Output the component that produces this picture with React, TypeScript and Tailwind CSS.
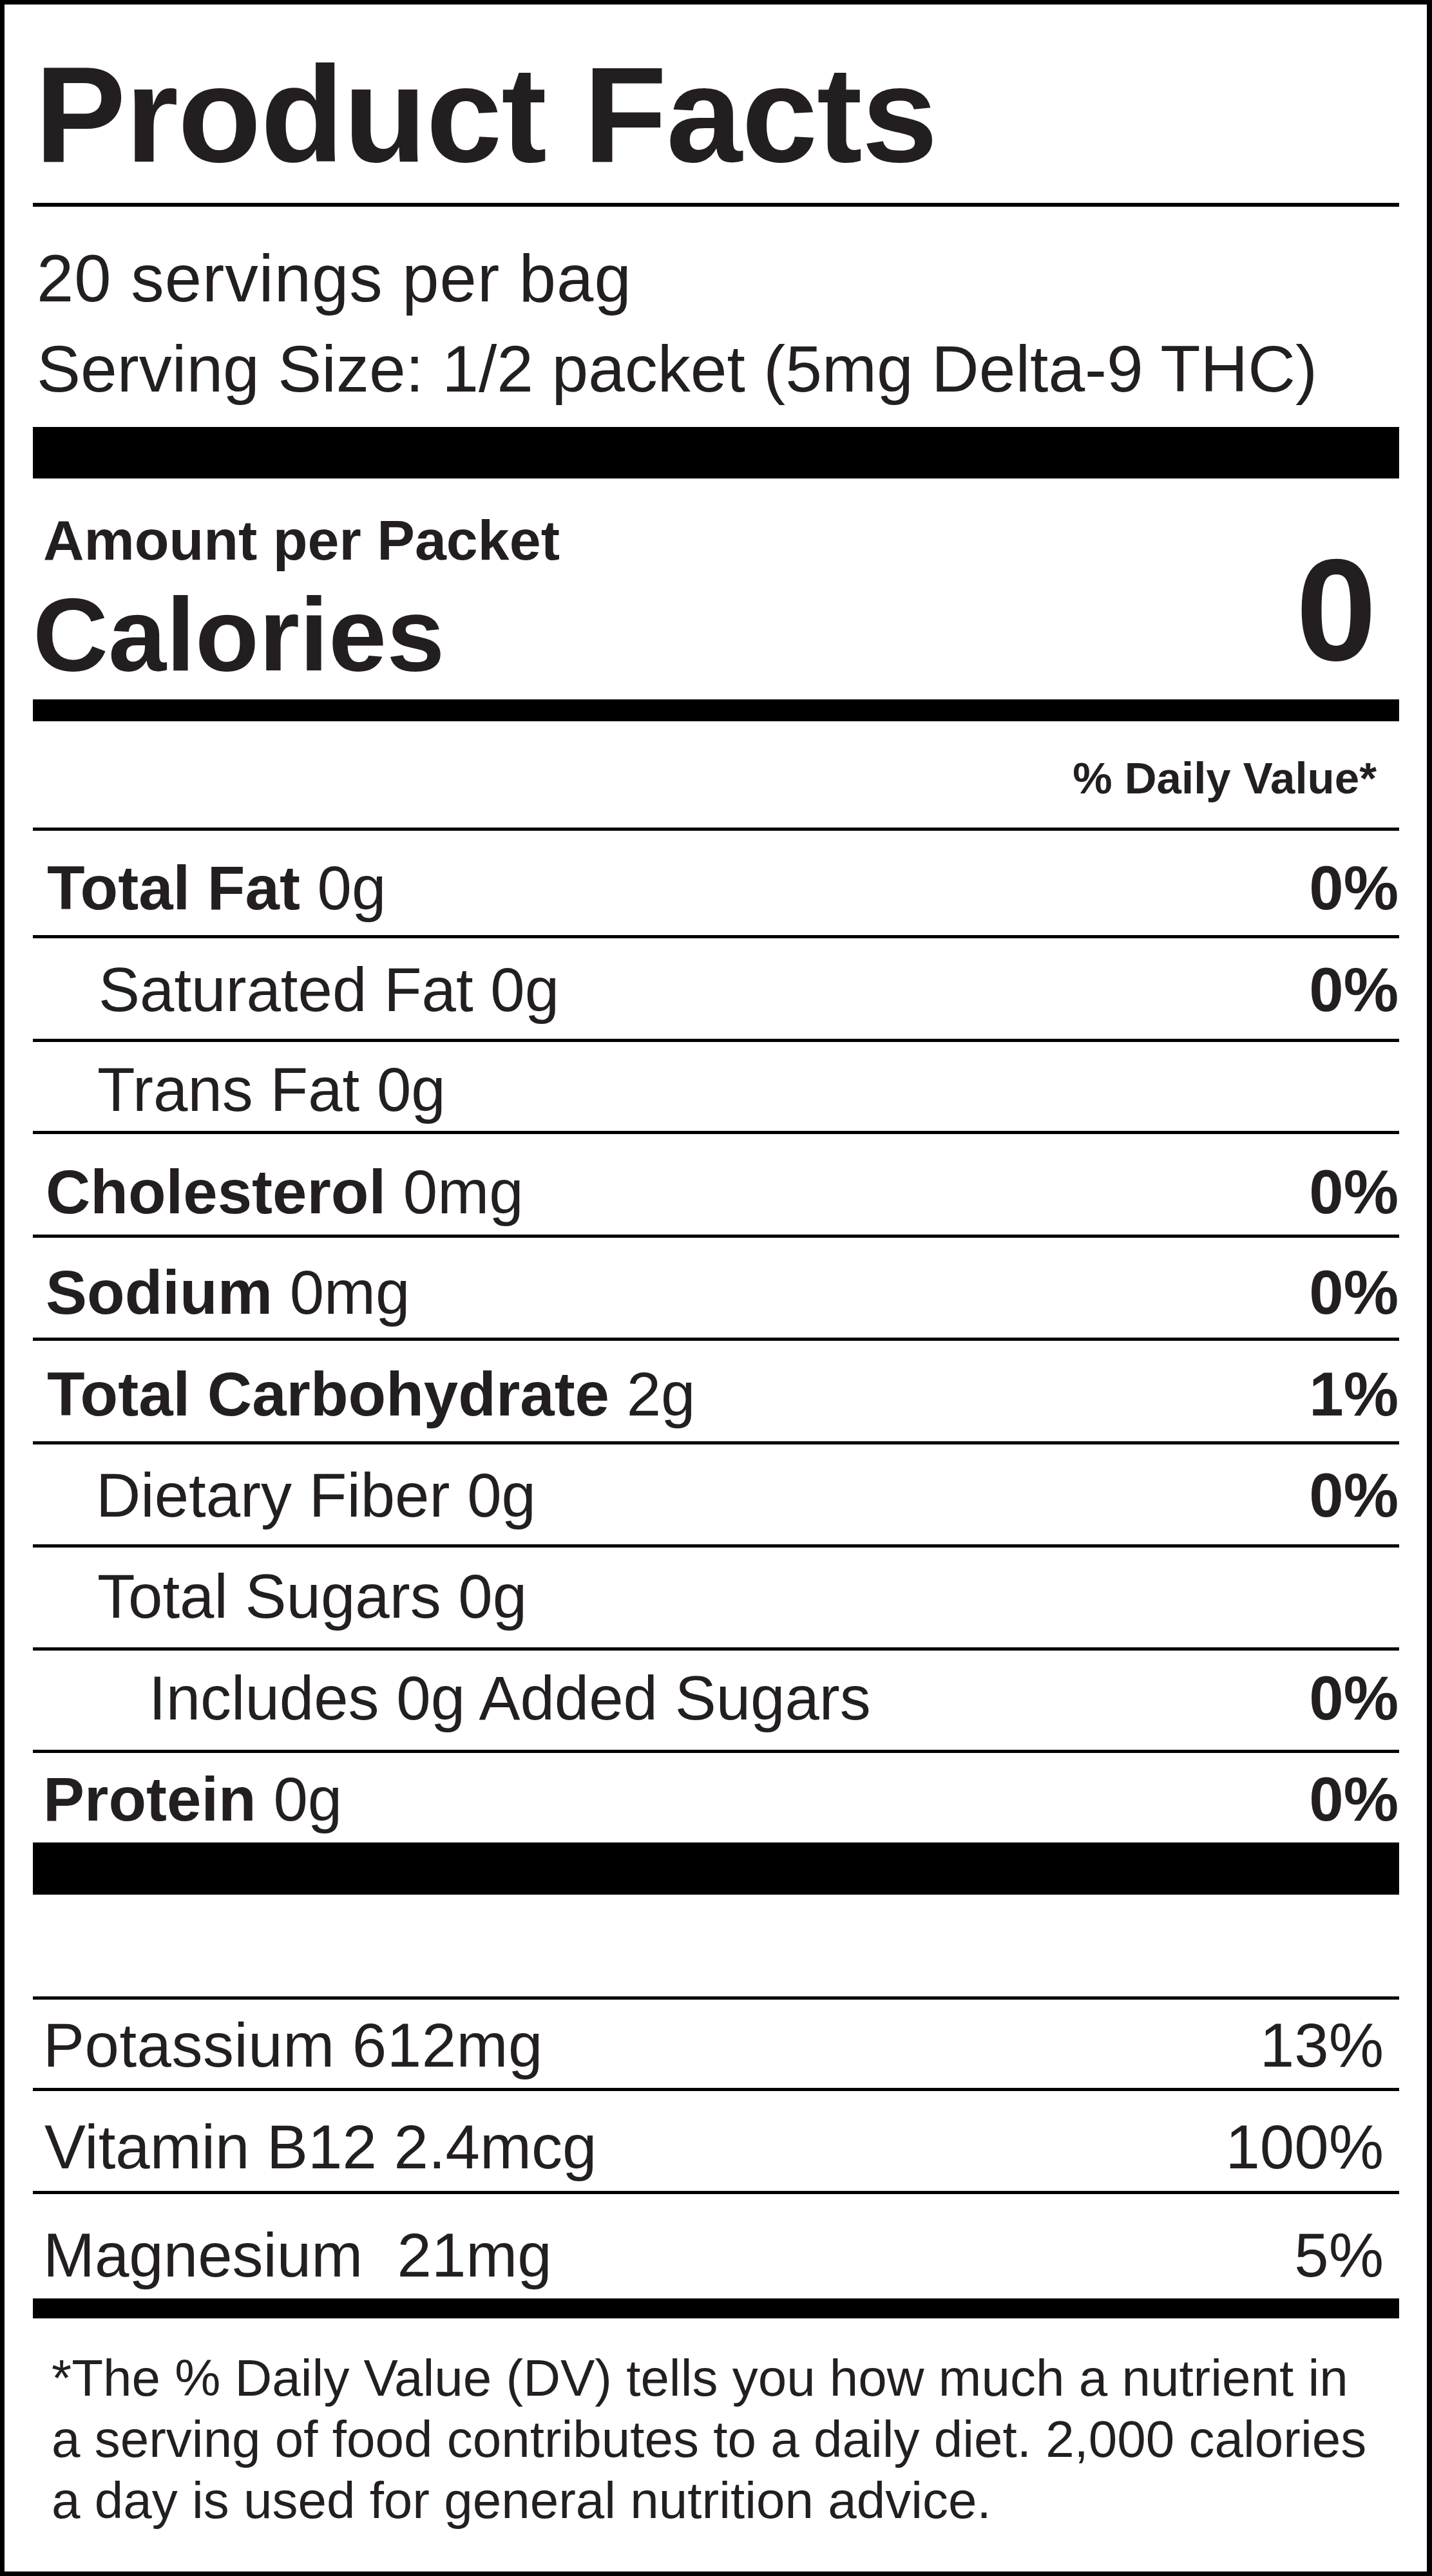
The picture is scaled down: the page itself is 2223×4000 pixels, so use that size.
type Row = {
  bold?: string;
  text: string;
  pct?: string;
  cls: string;
  line?: boolean;
};

// heights include the 5px rule drawn under each row
const rows: Row[] = [
  { bold: 'Total Fat', text: ' 0g', pct: '0%', cls: 'h-[167px] pb-[25px] pl-[22px]', line: true },
  { text: 'Saturated Fat 0g', pct: '0%', cls: 'h-[161px] pb-[28px] pl-[102px]', line: true },
  { text: 'Trans Fat 0g', cls: 'h-[143px] pb-[16px] pl-[100px]', line: true },
  { bold: 'Cholesterol', text: ' 0mg', pct: '0%', cls: 'h-[161px] pb-[18px] pl-[20px]', line: true },
  { bold: 'Sodium', text: ' 0mg', pct: '0%', cls: 'h-[160px] pb-[22px] pl-[20px]', line: true },
  { bold: 'Total Carbohydrate', text: ' 2g', pct: '1%', cls: 'h-[161px] pb-[25px] pl-[22px]', line: true },
  { text: 'Dietary Fiber 0g', pct: '0%', cls: 'h-[160px] pb-[28px] pl-[98px]', line: true },
  { text: 'Total Sugars 0g', cls: 'h-[160px] pb-[31px] pl-[100px]', line: true },
  { text: 'Includes 0g Added Sugars', pct: '0%', cls: 'h-[159px] pb-[32px] pl-[180px]', line: true },
  { bold: 'Protein', text: ' 0g', pct: '0%', cls: 'h-[139px] pb-[19px] pl-[16px]' },
];

const minerals: Row[] = [
  { text: 'Potassium 612mg', pct: '13%', cls: 'h-[142px] pb-[18px] pl-[16px] tracking-[0.5px]', line: true },
  { text: 'Vitamin B12 2.4mcg', pct: '100%', cls: 'h-[160px] pb-[20px] pl-[18px]', line: true },
  { text: 'Magnesium  21mg', pct: '5%', cls: 'h-[162px] pb-[19px] pl-[16px]' },
];

function FactRow({ row, pctCls }: { row: Row; pctCls: string }) {
  return (
    <div className={`flex items-end justify-between box-border ${row.cls} ${row.line ? 'border-b-[5px] border-black' : ''}`}>
      <span className="text-[96px] leading-none whitespace-pre">
        {row.bold && <span className="font-bold">{row.bold}</span>}
        {row.text}
      </span>
      {row.pct && <span className={`text-[96px] leading-none tracking-normal ${pctCls}`}>{row.pct}</span>}
    </div>
  );
}

export default function App() {
  return (
    <div className="w-[2223px] h-[4000px] bg-white text-[#231f20] font-['Liberation_Sans',Arial,sans-serif]">
      <div className="box-border h-full border-[7px] border-r-[8px] border-black pl-[44px] pr-[43px] flex flex-col">
        <h1 className="mt-[65px] pl-[3px] text-[212px] leading-none font-bold tracking-[-1px]">Product Facts</h1>
        <div className="mt-[31px] h-[6px] bg-black" />

        <div className="mt-[41px] pl-[6px] text-[103px] leading-[141px]">
          <p className="tracking-[1px]">20 servings per bag</p>
          <p className="text-[102px]">Serving Size: 1/2 packet (5mg Delta-9 THC)</p>
        </div>
        <div className="mt-[19px] h-[80px] bg-black" />

        <div className="mt-[52px] flex justify-between items-start">
          <div className="flex flex-col">
            <span className="pl-[16px] text-[88px] leading-none font-bold">Amount per Packet</span>
            <span className="mt-[21px] text-[162px] leading-none font-bold">Calories</span>
          </div>
          <span className="mt-[40px] pr-[35px] text-[225px] leading-none font-bold">0</span>
        </div>
        <div className="mt-[20px] h-[34px] bg-black" />

        <div className="mt-[54px] pr-[35px] text-right text-[69px] leading-none font-bold">% Daily Value*</div>
        <div className="mt-[42px] h-[5px] bg-black" />

        {rows.map((r) => (
          <FactRow key={r.text + (r.bold ?? '')} row={r} pctCls="font-bold pr-[1px]" />
        ))}
        <div className="h-[81px] bg-black" />

        <div className="mt-[158px] h-[5px] bg-black" />
        {minerals.map((r) => (
          <FactRow key={r.text} row={r} pctCls="pr-[24px]" />
        ))}
        <div className="h-[31px] bg-black" />

        <p className="mt-[45px] pl-[29px] text-[80px] leading-[95px]">
          *The % Daily Value (DV) tells you how much a nutrient in
          <br />
          a serving of food contributes to a daily diet. 2,000 calories
          <br />
          a day is used for general nutrition advice.
        </p>
      </div>
    </div>
  );
}
